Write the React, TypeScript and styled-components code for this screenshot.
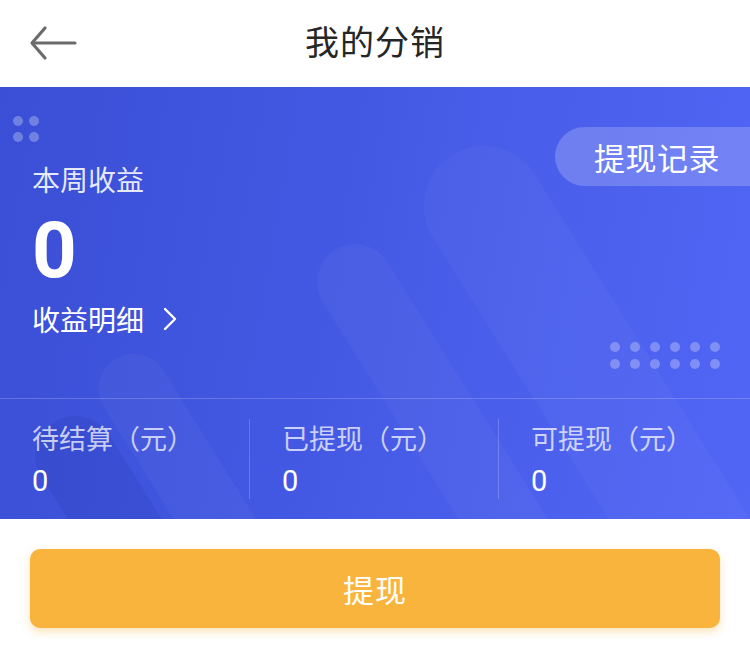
import React from "react";
import styled, { createGlobalStyle } from "styled-components";

const Global = createGlobalStyle`
  html, body { margin: 0; padding: 0; background: #ffffff; }
  body { font-family: "Noto Sans CJK SC", "Noto Sans", Roboto, sans-serif; }
  * { box-sizing: border-box; }
`;

const Page = styled.div`
  width: 750px;
  min-height: 657px;
  background: #ffffff;
`;

const Header = styled.header`
  position: relative;
  height: 87px;
  padding-bottom: 6px;
  display: flex;
  align-items: center;
  justify-content: center;
  background: #ffffff;
`;

const BackButton = styled.button`
  position: absolute;
  left: 28px;
  top: 24px;
  width: 50px;
  height: 38px;
  padding: 0;
  border: 0;
  background: transparent;
  display: flex;
  align-items: center;
  justify-content: center;
`;

const Title = styled.h1`
  margin: 0;
  font-size: 34px;
  font-weight: 400;
  color: #262626;
  letter-spacing: 1px;
`;

const Card = styled.section`
  position: relative;
  overflow: hidden;
  background: linear-gradient(100deg, #3a4fd5 0%, #4459e3 45%, #5266f6 100%);
  color: #ffffff;
`;

const Capsule = styled.div<{ $l: number; $t: number; $w: number; $h: number; $bg: string }>`
  position: absolute;
  left: ${(p) => p.$l}px;
  top: ${(p) => p.$t}px;
  width: ${(p) => p.$w}px;
  height: ${(p) => p.$h}px;
  border-radius: ${(p) => p.$w / 2}px;
  background: ${(p) => p.$bg};
  transform-origin: top center;
  transform: rotate(-32deg);
`;

const DotGrid = styled.div<{ $l: number; $t: number; $cols: number; $cgap: number; $rgap: number }>`
  position: absolute;
  left: ${(p) => p.$l}px;
  top: ${(p) => p.$t}px;
  display: grid;
  grid-template-columns: repeat(${(p) => p.$cols}, 10px);
  column-gap: ${(p) => p.$cgap}px;
  row-gap: ${(p) => p.$rgap}px;
`;

const Dot = styled.span`
  width: 10px;
  height: 10px;
  border-radius: 50%;
  background: rgba(255, 255, 255, 0.28);
`;

const RecordPill = styled.button`
  position: absolute;
  left: 555px;
  top: 40px;
  width: 230px;
  height: 59px;
  border: 0;
  border-radius: 30px;
  background: rgba(255, 255, 255, 0.2);
  color: #ffffff;
  font-family: inherit;
  font-size: 31px;
  text-align: left;
  padding: 0 0 0 39px;
  letter-spacing: 0.5px;
`;

const Summary = styled.div`
  position: relative;
  height: 311px;
  padding: 73px 32px 0;
  display: flex;
  flex-direction: column;
  align-items: flex-start;
`;

const Label = styled.div`
  font-size: 28px;
  line-height: 38px;
  color: rgba(255, 255, 255, 0.88);
`;

const BigValue = styled.div`
  margin-top: 14px;
  font-family: Roboto, "Noto Sans", sans-serif;
  font-size: 78px;
  line-height: 78px;
  font-weight: 700;
`;

const DetailLink = styled.div`
  margin-top: 10px;
  display: flex;
  align-items: center;
  gap: 18px;
  font-size: 28px;
  line-height: 38px;
`;

const Divider = styled.div`
  position: relative;
  height: 1px;
  background: rgba(255, 255, 255, 0.2);
`;

const Stats = styled.div`
  position: relative;
  height: 120px;
  padding-top: 20px;
  display: grid;
  grid-template-columns: 249px 249px 252px;
`;

const StatCol = styled.div<{ $sep?: boolean }>`
  display: flex;
  flex-direction: column;
  gap: 6px;
  padding-left: 32px;
  height: 80px;
  border-left: ${(p) => (p.$sep ? "1px solid rgba(255,255,255,0.2)" : "none")};
`;

const StatLabel = styled.div`
  font-size: 27px;
  line-height: 38px;
  color: rgba(255, 255, 255, 0.72);
`;

const StatValue = styled.div`
  font-family: Roboto, "Noto Sans", sans-serif;
  font-size: 29px;
  line-height: 36px;
  color: #ffffff;
`;

const ButtonWrap = styled.div`
  padding: 30px 30px 0;
`;

const WithdrawButton = styled.button`
  width: 690px;
  height: 79px;
  border: 0;
  border-radius: 10px;
  background: #f9b43d;
  box-shadow: 0 4px 8px rgba(249, 180, 61, 0.35);
  color: #ffffff;
  font-family: inherit;
  font-size: 31px;
  letter-spacing: 1px;
`;

const stats = [
  { label: "待结算（元）", value: "0" },
  { label: "已提现（元）", value: "0" },
  { label: "可提现（元）", value: "0" },
];

export default function App() {
  return (
    <Page>
      <Global />
      <Header>
        <BackButton aria-label="返回">
          <svg width="48" height="36" viewBox="0 0 48 36" fill="none">
            <path d="M46 18H4" stroke="#6b6b6b" strokeWidth="3.2" strokeLinecap="round" />
            <path d="M16 3L3 18L16 33" stroke="#6b6b6b" strokeWidth="3.2" strokeLinecap="round" strokeLinejoin="round" />
          </svg>
        </BackButton>
        <Title>我的分销</Title>
      </Header>

      <Card>
        <Capsule $l={392} $t={68} $w={120} $h={560} $bg="rgba(255,255,255,0.03)" />
        <Capsule $l={297} $t={163} $w={76} $h={380} $bg="rgba(255,255,255,0.035)" />
        <Capsule $l={80} $t={272} $w={70} $h={260} $bg="rgba(255,255,255,0.03)" />
        <Capsule $l={14} $t={335} $w={80} $h={240} $bg="rgba(20,30,140,0.1)" />

        <DotGrid $l={13} $t={29} $cols={2} $cgap={6} $rgap={6}>
          {Array.from({ length: 4 }).map((_, i) => (
            <Dot key={i} />
          ))}
        </DotGrid>
        <DotGrid $l={610} $t={255} $cols={6} $cgap={10} $rgap={7}>
          {Array.from({ length: 12 }).map((_, i) => (
            <Dot key={i} />
          ))}
        </DotGrid>

        <RecordPill>提现记录</RecordPill>

        <Summary>
          <Label>本周收益</Label>
          <BigValue>0</BigValue>
          <DetailLink>
            收益明细
            <svg width="16" height="26" viewBox="0 0 16 26" fill="none">
              <path d="M3 3L13 13L3 23" stroke="#ffffff" strokeWidth="2.4" strokeLinecap="round" strokeLinejoin="round" />
            </svg>
          </DetailLink>
        </Summary>
        <Divider />
        <Stats>
          {stats.map((s, i) => (
            <StatCol key={s.label} $sep={i > 0}>
              <StatLabel>{s.label}</StatLabel>
              <StatValue>{s.value}</StatValue>
            </StatCol>
          ))}
        </Stats>
      </Card>

      <ButtonWrap>
        <WithdrawButton>提现</WithdrawButton>
      </ButtonWrap>
    </Page>
  );
}
